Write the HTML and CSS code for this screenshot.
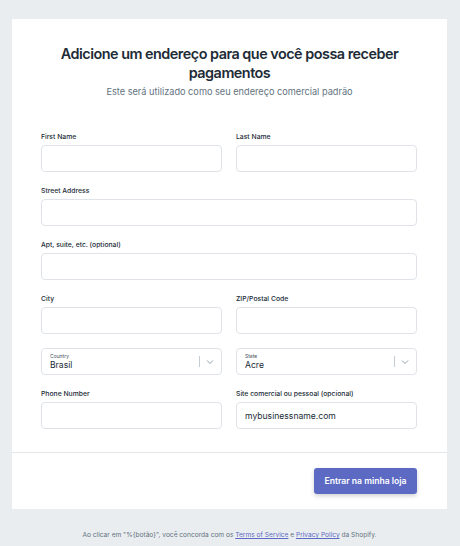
FILE: index.html
```html
<!DOCTYPE html>
<html lang="pt">
<head>
    <meta charset="UTF-8">
    <title>Endereço</title>
    <link rel="stylesheet" href="styles.css">
</head>
<body>
<div class="page">
    <div class="card">
        <div class="card-head">
            <h1>Adicione um endereço para que você possa receber pagamentos</h1>
            <p class="sub">Este será utilizado como seu endereço comercial padrão</p>
        </div>
        <form class="form" action="#">
            <div class="field">
                <label>First Name</label>
                <input type="text">
            </div>
            <div class="field">
                <label>Last Name</label>
                <input type="text">
            </div>
            <div class="field full">
                <label>Street Address</label>
                <input type="text">
            </div>
            <div class="field full">
                <label>Apt, suite, etc. (optional)</label>
                <input type="text">
            </div>
            <div class="field">
                <label>City</label>
                <input type="text">
            </div>
            <div class="field">
                <label>ZIP/Postal Code</label>
                <input type="text">
            </div>
            <div class="select">
                <div class="select-text">
                    <span class="select-label">Country</span>
                    <span class="select-value">Brasil</span>
                </div>
                <span class="select-sep"></span>
                <svg class="chevron" width="8" height="6" viewBox="0 0 8 6"><path d="M1 1.5 L4 4.5 L7 1.5" fill="none" stroke="#919eab" stroke-width="1"/></svg>
            </div>
            <div class="select">
                <div class="select-text">
                    <span class="select-label">State</span>
                    <span class="select-value">Acre</span>
                </div>
                <span class="select-sep"></span>
                <svg class="chevron" width="8" height="6" viewBox="0 0 8 6"><path d="M1 1.5 L4 4.5 L7 1.5" fill="none" stroke="#919eab" stroke-width="1"/></svg>
            </div>
            <div class="field">
                <label>Phone Number</label>
                <input type="text">
            </div>
            <div class="field">
                <label>Site comercial ou pessoal (opcional)</label>
                <input type="text" placeholder="mybusinessname.com">
            </div>
        </form>
        <div class="card-foot">
            <button class="btn" type="button">Entrar na minha loja</button>
        </div>
    </div>
    <p class="legal">Ao clicar em "%{botão}", você concorda com os <a href="#">Terms of Service</a> e <a href="#">Privacy Policy</a> da Shopify.</p>
</div>
</body>
</html>
```

FILE: styles.css
```css
body{
    margin:0;
    background:#eaedf0;
    font-family: Inter, "Liberation Sans", sans-serif;
    color:#212b36;
}
.page{
    padding:19px 13px 0 12px;
}
.card{
    background:#fff;
}
.card-head{
    padding:25px 30px 0;
    text-align:center;
}
.card-head h1{
    margin:0;
    font-size:14.4px;
    line-height:19px;
    font-weight:600;
    letter-spacing:-0.5px;
}
.card-head .sub{
    margin:3px 0 0;
    font-size:9.2px;
    line-height:14px;
    color:#637381;
}
.form{
    display:grid;
    grid-template-columns:1fr 1fr;
    column-gap:14px;
    row-gap:14px;
    padding:33px 30px 23px 29px;
    border-bottom:1px solid #e4e7ea;
}
.field{
    display:flex;
    flex-direction:column;
}
.field.full{
    grid-column:1 / 3;
}
.field label{
    font-size:6.8px;
    line-height:10px;
    font-weight:500;
    margin-bottom:3px;
    color:#212b36;
}
.field input{
    height:27px;
    box-sizing:border-box;
    border:1px solid #dfe3e8;
    border-radius:4px;
    padding:0 8px;
    font-family:inherit;
    font-size:8.6px;
    color:#212b36;
}
.field input::placeholder{
    color:#212b36;
}
.select{
    height:27px;
    box-sizing:border-box;
    border:1px solid #dfe3e8;
    border-radius:4px;
    display:flex;
    align-items:center;
    padding:0 7px 0 8px;
}
.select-text{
    flex:1;
    display:flex;
    flex-direction:column;
}
.select-label{
    font-size:5px;
    line-height:7px;
    color:#454f5b;
}
.select-value{
    font-size:8.6px;
    line-height:11px;
}
.select-sep{
    width:1px;
    height:11px;
    background:#c4cdd5;
    margin-right:6px;
}
.card-foot{
    display:flex;
    justify-content:flex-end;
    padding:15px 30px 15px;
}
.btn{
    width:103px;
    height:26px;
    border:0;
    border-radius:3px;
    background:#5c6ac4;
    color:#fff;
    font-family:inherit;
    font-size:8.6px;
    font-weight:600;
    box-shadow:0 2px 4px rgba(0,0,0,0.18);
}
.legal{
    margin:22px 0 0;
    text-align:center;
    font-size:6.6px;
    color:#637381;
}
.legal a{
    color:#5c6ac4;
}
```
